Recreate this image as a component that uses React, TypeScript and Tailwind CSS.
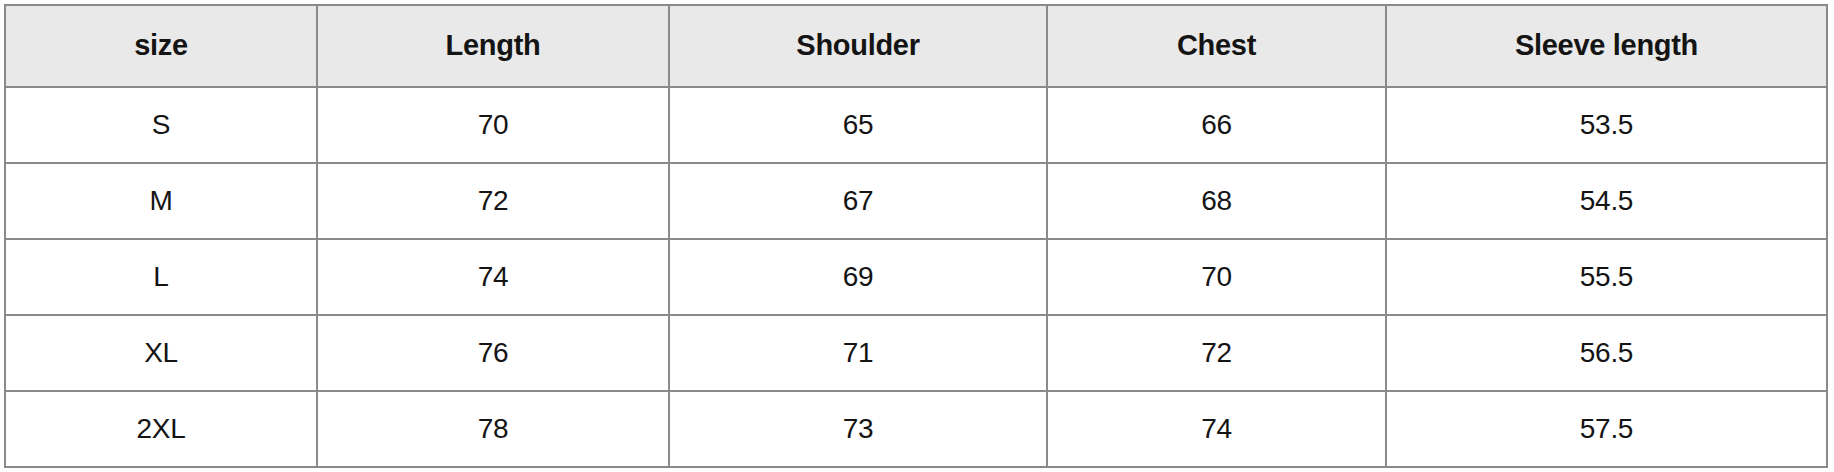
import React from "react";

const headers = ["size", "Length", "Shoulder", "Chest", "Sleeve length"];
const rows = [
  ["S", "70", "65", "66", "53.5"],
  ["M", "72", "67", "68", "54.5"],
  ["L", "74", "69", "70", "55.5"],
  ["XL", "76", "71", "72", "56.5"],
  ["2XL", "78", "73", "74", "57.5"],
];

export default function App() {
  return (
    <div className="w-[1834px] h-[472px] bg-white p-[4px]" style={{ fontFamily: '"Liberation Sans", Arial, sans-serif' }}>
      <div className="grid grid-cols-[312px_352px_378px_339px_441px] w-[1824px] border-l-2 border-t-2 border-[#8a8a8a] text-[#141414]">
        {headers.map((h) => (
          <div
            key={h}
            className="h-[82px] flex items-center justify-center bg-[#e9e9e9] border-r-2 border-b-2 border-[#8a8a8a] text-[29px] font-bold tracking-[-0.3px]"
          >
            {h}
          </div>
        ))}
        {rows.map((r, i) =>
          r.map((c, j) => (
            <div
              key={`${i}-${j}`}
              className="h-[76px] flex items-center justify-center bg-white border-r-2 border-b-2 border-[#8a8a8a] text-[28px] tracking-[-0.3px]"
            >
              {c}
            </div>
          ))
        )}
      </div>
    </div>
  );
}
